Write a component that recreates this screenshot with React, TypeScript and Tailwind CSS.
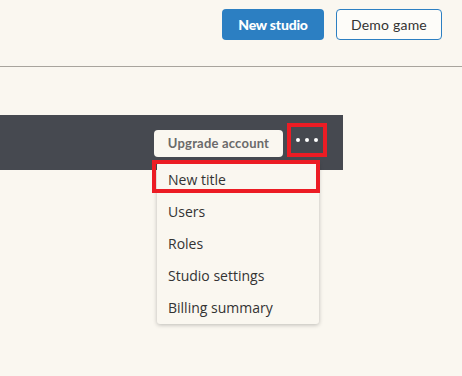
const menuItems = ['New title', 'Users', 'Roles', 'Studio settings', 'Billing summary'];

export default function App() {
    return (
        <div className="w-[462px] h-[376px] bg-[#faf7f0] overflow-hidden font-['Lato',sans-serif]">
            <header className="h-[67px] border-b border-[#a8a49d] flex justify-end items-start pt-[9px] pr-[20px] gap-3">
                <button className="w-[102px] h-[31px] rounded-[4px] bg-[#2c7fc2] text-white text-[14px] font-black tracking-[-0.2px]">
                    New studio
                </button>
                <button className="w-[106px] h-[31px] rounded-[4px] border border-[#2c7fc2] bg-[#fdfcf9] text-[#333] text-[14px] tracking-[0.2px]">
                    Demo game
                </button>
            </header>

            <div className="mt-[48px] relative w-[343px] h-[55px] bg-[#464950] flex items-start justify-end pr-[16px]">
                <button className="mt-[15px] w-[129px] h-[27px] rounded-[4px] bg-[#faf7f0] text-[#6a6a6a] text-[13px] font-bold tracking-[0.2px]">
                    Upgrade account
                </button>
                <div className="ml-[4px] mt-[8px] w-[40px] h-[34px] border-4 border-[#ec1c24] flex items-center justify-center gap-[5px]">
                    <span className="w-[4px] h-[4px] rounded-full bg-white" />
                    <span className="w-[4px] h-[4px] rounded-full bg-white" />
                    <span className="w-[4px] h-[4px] rounded-full bg-white" />
                </div>

                <ul className="absolute top-[47px] right-[24px] w-[162px] py-[1px] bg-[#faf7f0] rounded-[3px] shadow-[0_1px_4px_rgba(0,0,0,0.25)] font-['Open_Sans',sans-serif] text-[14px] text-[#333]">
                    {menuItems.map((item, i) => (
                        <li key={item} className="relative h-[32px] flex items-center pl-[11px]">
                            {i === 0 && (
                                <span className="absolute -left-[5px] -right-[1px] -top-[3px] bottom-[2px] border-4 border-[#ec1c24]" />
                            )}
                            {item}
                        </li>
                    ))}
                </ul>
            </div>
        </div>
    );
}
